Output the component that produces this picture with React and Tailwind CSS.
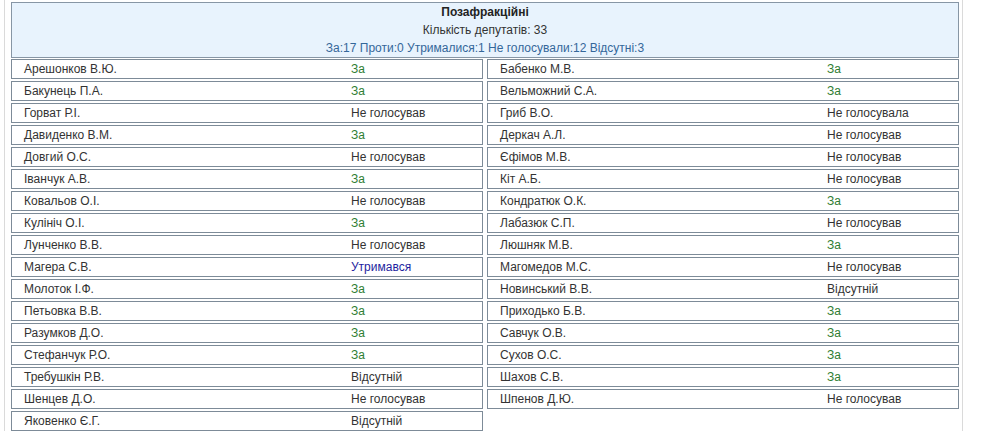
const left = [
  ["Арешонков В.Ю.", "За"],
  ["Бакунець П.А.", "За"],
  ["Горват Р.І.", "Не голосував"],
  ["Давиденко В.М.", "За"],
  ["Довгий О.С.", "Не голосував"],
  ["Іванчук А.В.", "За"],
  ["Ковальов О.І.", "Не голосував"],
  ["Кулініч О.І.", "За"],
  ["Лунченко В.В.", "Не голосував"],
  ["Магера С.В.", "Утримався"],
  ["Молоток І.Ф.", "За"],
  ["Петьовка В.В.", "За"],
  ["Разумков Д.О.", "За"],
  ["Стефанчук Р.О.", "За"],
  ["Требушкін Р.В.", "Відсутній"],
  ["Шенцев Д.О.", "Не голосував"],
  ["Яковенко Є.Г.", "Відсутній"],
];

const right = [
  ["Бабенко М.В.", "За"],
  ["Вельможний С.А.", "За"],
  ["Гриб В.О.", "Не голосувала"],
  ["Деркач А.Л.", "Не голосував"],
  ["Єфімов М.В.", "Не голосував"],
  ["Кіт А.Б.", "Не голосував"],
  ["Кондратюк О.К.", "За"],
  ["Лабазюк С.П.", "Не голосував"],
  ["Люшняк М.В.", "За"],
  ["Магомедов М.С.", "Не голосував"],
  ["Новинський В.В.", "Відсутній"],
  ["Приходько Б.В.", "За"],
  ["Савчук О.В.", "За"],
  ["Сухов О.С.", "За"],
  ["Шахов С.В.", "За"],
  ["Шпенов Д.Ю.", "Не голосував"],
];

const voteColor = (v) => {
  if (v === "За") return "text-[#2e7d32]";
  if (v === "Утримався") return "text-[#1f1fa0]";
  return "text-[#333333]";
};

const Row = ({ name, vote }) => (
  <div className="grid grid-cols-[339px_1fr] h-5 items-center border border-[#7d8b98] bg-white leading-[18px]">
    <span className="pl-3 text-[#333333]">{name}</span>
    <span className={voteColor(vote)}>{vote}</span>
  </div>
);

const App = () => {
  return (
    <div className="w-[1006px] h-[431px] overflow-hidden bg-white font-['Liberation_Sans',Arial,sans-serif] text-[12px]">
      <div className="ml-1 w-[959px] h-full border-x border-[#dadada] pt-[2px] pl-[6px] pr-[3px]">
        <div className="border border-[#8796a5] bg-[#e8f3fd] text-center leading-[18px] mb-px">
          <div className="font-bold text-[#222222]">Позафракційні</div>
          <div className="text-[#333333]">Кількість депутатів: 33</div>
          <div className="text-[#34679a]">
            За:17 Проти:0 Утрималися:1 Не голосували:12 Відсутні:3
          </div>
        </div>
        <div className="grid grid-cols-2 gap-x-1 items-start">
          <div className="flex flex-col gap-[2px]">
            {left.map(([n, v]) => (
              <Row key={n} name={n} vote={v} />
            ))}
          </div>
          <div className="flex flex-col gap-[2px]">
            {right.map(([n, v]) => (
              <Row key={n} name={n} vote={v} />
            ))}
          </div>
        </div>
      </div>
    </div>
  );
};

export default App;
